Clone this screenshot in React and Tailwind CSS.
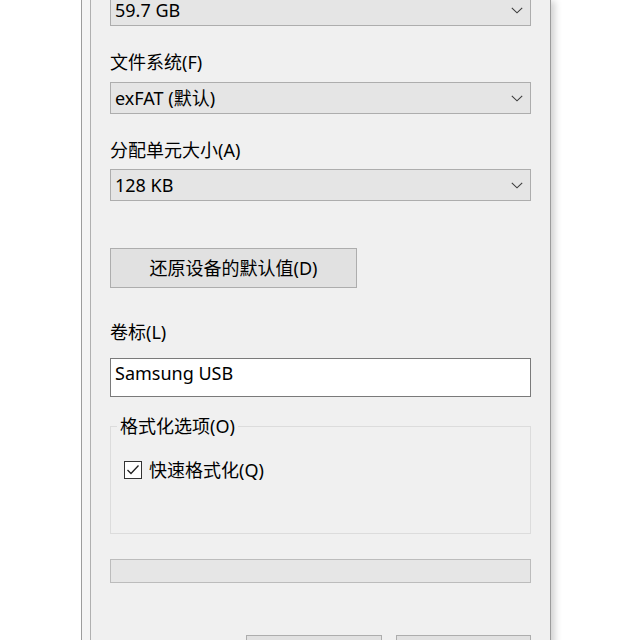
import React from "react";

const font = { fontFamily: '"Noto Sans", "Noto Sans CJK SC", sans-serif' };

function Chevron() {
  return (
    <svg width="12" height="7" viewBox="0 0 12 7" className="shrink-0">
      <polyline points="0.8,0.8 6,5.8 11.2,0.8" fill="none" stroke="#3c3c3c" strokeWidth="1.1" />
    </svg>
  );
}

function Select({ value, className = "", lead = "leading-[24px]" }) {
  return (
    <div
      className={`flex h-[32px] items-center justify-between border border-[#adadad] bg-[#e5e5e5] pl-[4px] pr-[7px] text-[18px] text-black ${lead} ${className}`}
    >
      <span>{value}</span>
      <Chevron />
    </div>
  );
}

function Label({ children, className = "" }) {
  return <div className={`h-[24px] text-[18px] leading-[24px] text-black ${className}`}>{children}</div>;
}

export default function App() {
  return (
    <div className="h-[640px] w-[640px] overflow-hidden bg-white" style={font}>
      <div className="ml-[81px] flex h-[700px] w-[470px] border-l border-r border-[#9c9c9c] bg-[#f4f4f4] shadow-[5px_0_7px_-1px_rgba(0,0,0,0.18)]">
        <div className="ml-[8px] flex flex-1 flex-col border-l border-[#b0b0b0] bg-[#f0f0f0] pl-[19px] pr-[19px]">
          <Select value="59.7 GB" className="mt-[-6px]" lead="leading-[19px]" />

          <Label className="mt-[24px]">文件系统(F)</Label>
          <Select value="exFAT (默认)" className="mt-[8px]" />

          <Label className="mt-[24px]">分配单元大小(A)</Label>
          <Select value="128 KB" className="mt-[7px]" />

          <button className="mt-[47px] flex h-[40px] w-[247px] items-center justify-center border border-[#adadad] bg-[#e1e1e1] text-[18px] leading-[24px] text-black">
            还原设备的默认值(D)
          </button>

          <Label className="mt-[32px]">卷标(L)</Label>
          <div className="mt-[14px] h-[39px] border border-[#7a7a7a] bg-white pl-[4px] pt-[2px] text-[18px] leading-[24px] text-black">
            Samsung USB
          </div>

          <fieldset className="mt-[17px] h-[120px] border border-[#dcdcdc]">
            <legend className="ml-[6px] px-[3px] text-[18px] leading-[24px] text-black">格式化选项(O)</legend>
            <div className="mt-[20px] flex h-[24px] items-center pl-[13px]">
              <div className="flex h-[18px] w-[18px] items-center justify-center border border-[#333333] bg-white">
                <svg width="16" height="16" viewBox="0 0 16 16">
                  <polyline points="2.5,8 6,11.5 13.5,3.5" fill="none" stroke="#222" strokeWidth="1.3" />
                </svg>
              </div>
              <span className="ml-[7px] text-[18px] leading-[24px] text-black">快速格式化(Q)</span>
            </div>
          </fieldset>

          <div className="mt-[25px] h-[24px] border border-[#bcbcbc] bg-[#e6e6e6]" />

          <div className="mt-[52px] flex justify-end gap-[14px]">
            <button className="h-[40px] w-[136px] border border-[#adadad] bg-[#e1e1e1]" />
            <button className="h-[40px] w-[135px] border border-[#adadad] bg-[#e1e1e1]" />
          </div>
        </div>
      </div>
    </div>
  );
}
